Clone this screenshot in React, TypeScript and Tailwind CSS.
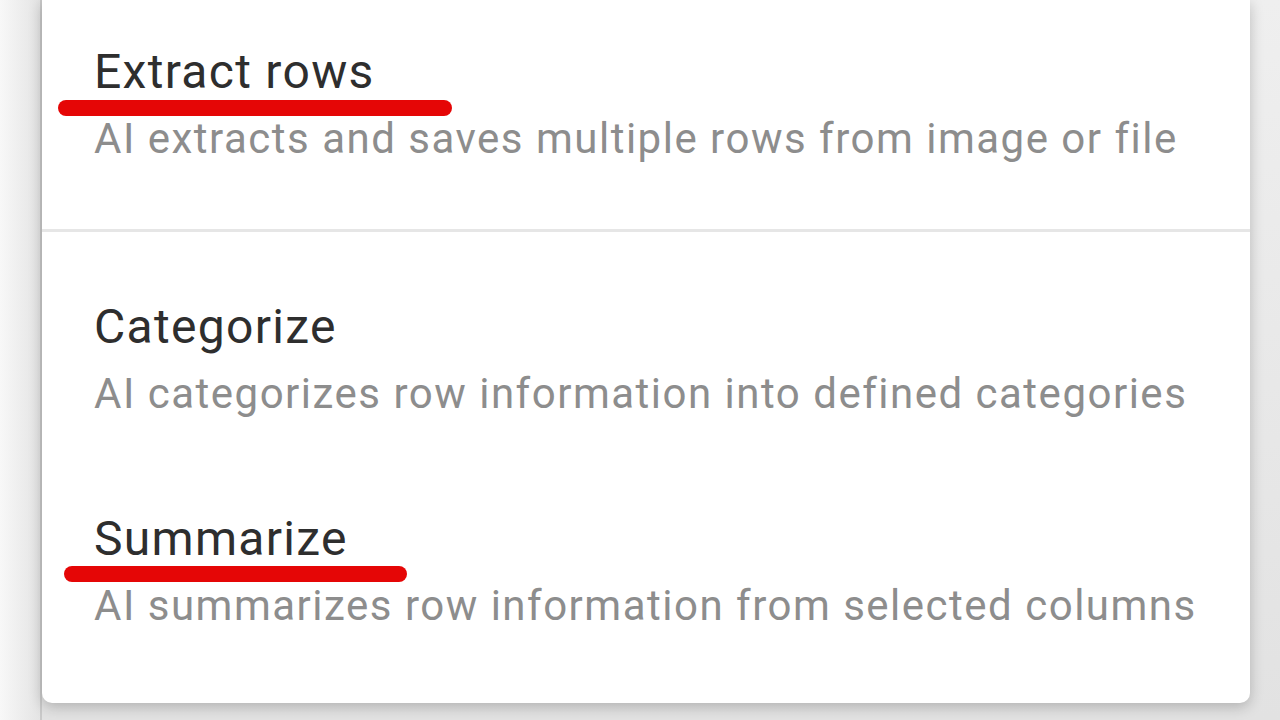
const items = [
  {
    title: 'Extract rows',
    description: 'AI extracts and saves multiple rows from image or file',
  },
  {
    title: 'Categorize',
    description: 'AI categorizes row information into defined categories',
  },
  {
    title: 'Summarize',
    description: 'AI summarizes row information from selected columns',
  },
];

function MenuItem({ title, description, className }: { title: string; description: string; className: string }) {
  return (
    <div className={`px-[52px] ${className}`}>
      <div className="text-[48px] leading-[56px] tracking-[1.3px] text-[#2e2e2e]">{title}</div>
      <div className="mt-[14px] text-[42px] leading-[50px] tracking-[1.5px] text-[#8d8d8d] whitespace-nowrap">
        {description}
      </div>
    </div>
  );
}

export default function App() {
  return (
    <div
      className="flex h-[720px] w-[1280px] overflow-hidden bg-[#ececec]"
      style={{ fontFamily: 'Roboto, "Liberation Sans", sans-serif' }}
    >
      <div className="w-[42px] shrink-0 border-r-2 border-[#c9c9c9] bg-gradient-to-r from-[#f8f8f8] to-[#e4e4e4]" />
      <div className="flex-1 bg-gradient-to-b from-[#efefef] to-[#e2e2e2] pr-[30px] pb-[17px]">
        <div className="relative h-full rounded-b-[10px] bg-white shadow-[0_4px_14px_rgba(0,0,0,0.22)]">
          <MenuItem {...items[0]} className="pt-[44px] pb-[65px]" />
          <div className="h-[3px] bg-[#e6e6e6]" />
          <MenuItem {...items[1]} className="pt-[67px] pb-[46px]" />
          <MenuItem {...items[2]} className="pt-[46px]" />

          {/* annotation marks */}
          <div className="absolute left-[16px] top-[100px] h-[16px] w-[394px] rounded-full bg-[#e50606]" />
          <div className="absolute left-[22px] top-[566px] h-[16px] w-[343px] rounded-full bg-[#e50606]" />
        </div>
      </div>
    </div>
  );
}
